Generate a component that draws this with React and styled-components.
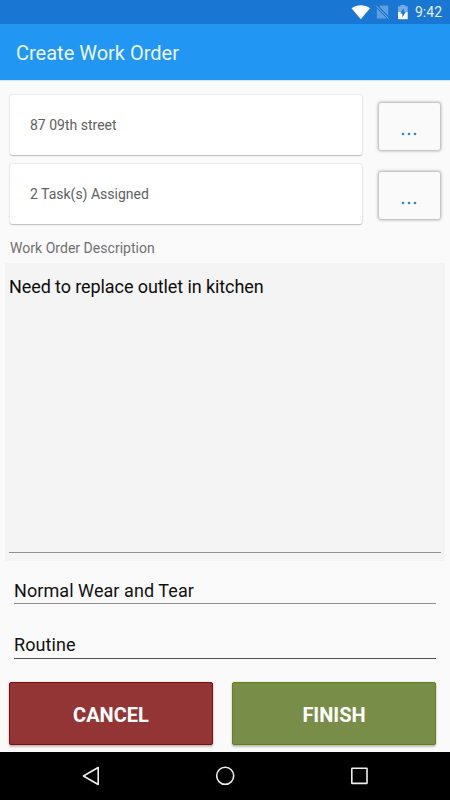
import React from "react";
import styled, { createGlobalStyle } from "styled-components";

const Global = createGlobalStyle`
  * { box-sizing: border-box; }
  body { margin: 0; background: #fafafa; }
  button { font-family: inherit; }
`;

const Screen = styled.div`
  width: 450px;
  height: 800px;
  display: flex;
  flex-direction: column;
  overflow: hidden;
  background: #fafafa;
  font-family: Roboto, sans-serif;
`;

const StatusBar = styled.div`
  height: 24px;
  flex: none;
  display: flex;
  justify-content: flex-end;
  background: #1976d2;
  padding-right: 8px;
`;

const StatusIcons = styled.svg`
  width: 60px;
  height: 24px;
`;

const Clock = styled.span`
  width: 32px;
  font-size: 14px;
  line-height: 25px;
  color: #e3effa;
  padding-left: 5px;
  white-space: nowrap;
`;

const AppBar = styled.header`
  height: 56px;
  flex: none;
  display: flex;
  align-items: center;
  padding: 2px 16px 0;
  background: #2196f3;
  box-shadow: 0 1px 0 #d3e5f2;
`;

const Title = styled.h1`
  margin: 0;
  font-size: 20px;
  line-height: 24px;
  font-weight: 400;
  color: #eef7fe;
`;

const Pickers = styled.div`
  display: grid;
  flex: none;
  padding: 15px 10px 0;
  row-gap: 9px;
`;

const PickerRow = styled.div`
  display: flex;
  justify-content: space-between;
  align-items: flex-start;
  height: 60px;
`;

const Card = styled.div`
  width: 352px;
  height: 60px;
  padding-left: 20px;
  border-radius: 2px;
  background: #fff;
  box-shadow: 0 0 2px rgba(0, 0, 0, 0.2), 0 1px 1px rgba(0, 0, 0, 0.2);
  font-size: 14px;
  line-height: 61px;
  color: #606060;
`;

const MoreButton = styled.button`
  width: 61px;
  height: 47px;
  margin: 8px 0 0;
  padding: 14px 2px 0 0;
  border: 0;
  border-radius: 2px;
  background: #fafafa;
  box-shadow: 0 0 3px 1px rgba(0, 0, 0, 0.32);
  display: flex;
  justify-content: center;
  align-items: center;
`;

const Dots = styled.svg`
  width: 18px;
  height: 4px;
`;

const FieldLabel = styled.label`
  flex: none;
  height: 31px;
  padding-left: 10px;
  font-size: 14px;
  line-height: 33px;
  letter-spacing: 0.03px;
  color: #707070;
  margin-top: 8px;
`;

const Description = styled.div`
  flex: none;
  height: 298px;
  margin: 0 5px;
  padding: 0 4px 8px;
  background: #f4f4f4;
`;

const DescriptionInput = styled.div`
  height: 290px;
  padding-top: 13px;
  border-bottom: 1px solid #909090;
  font-size: 18px;
  line-height: 22px;
  letter-spacing: -0.09px;
  color: #0d0d0d;
`;

const Selects = styled.div`
  flex: none;
  padding: 0 14px;
`;

const Select = styled.div`
  height: ${(p) => p.$height}px;
  display: flex;
  align-items: flex-end;
  padding-bottom: ${(p) => p.$gap}px;
  border-bottom: 1px solid ${(p) => p.$line};
  font-size: 18px;
  line-height: 22px;
  letter-spacing: 0.07px;
  color: #111;
`;

const Actions = styled.div`
  display: flex;
  gap: 19px;
  flex: none;
  height: 93px;
  padding: 23px 14px 0 9px;
`;

const Action = styled.button`
  width: 204px;
  height: 63px;
  padding: 2px 0 0;
  border: 1px solid ${(p) => p.$edge};
  border-radius: 2px;
  background: ${(p) => p.$fill};
  box-shadow: 0 2px 2px rgba(0, 0, 0, 0.22), 0 0 2px rgba(0, 0, 0, 0.15);
  font-size: 20px;
  font-weight: 700;
  color: #fff;
`;

const NavBar = styled.nav`
  height: 48px;
  flex: none;
  display: flex;
  justify-content: space-between;
  align-items: center;
  padding: 0 80px;
  background: #000;
`;

const NavIcon = styled.svg`
  width: 22px;
  height: 22px;
  fill: none;
  stroke: #eee;
  stroke-width: 1.6;
`;

const More = () => (
  <MoreButton aria-label="More">
    <Dots viewBox="0 0 18 4" fill="#2f86d0">
      <circle cx="3" cy="2" r="1.3" />
      <circle cx="9" cy="2" r="1.3" />
      <circle cx="15" cy="2" r="1.3" />
    </Dots>
  </MoreButton>
);

export default function App() {
  return (
    <Screen>
      <Global />
      <StatusBar>
        <StatusIcons viewBox="350 0 60 24">
          <path d="M351.5 8.2C356.5 4.2 365 4.2 370 8.2L360.8 19.2Z" fill="#fff" />
          <path d="M380.6 5.5H388.2V16L379 6.9ZM376.8 8.6L386.8 18.6H376.8Z" fill="#5e9fdf" />
          <path d="M376 5.6L388.6 18.5" stroke="#78afe4" strokeWidth="1" />
          <path d="M379 6.9L388.2 16.1" stroke="#1976d2" strokeWidth="1" />
          <path d="M398 6.3H400.5V5H405.2V6.3H407.7V12H398Z" fill="#75ade4" />
          <path d="M398 12H407.7V19.2H398Z" fill="#fff" />
          <path d="M403.8 8L400.2 13.4H402.4V17.4L405.9 11.8H403.8Z" fill="#1976d2" />
        </StatusIcons>
        <Clock>9:42</Clock>
      </StatusBar>
      <AppBar>
        <Title>Create Work Order</Title>
      </AppBar>
      <Pickers>
        <PickerRow>
          <Card>87 09th street</Card>
          <More />
        </PickerRow>
        <PickerRow>
          <Card>2 Task(s) Assigned</Card>
          <More />
        </PickerRow>
      </Pickers>
      <FieldLabel>Work Order Description</FieldLabel>
      <Description>
        <DescriptionInput>Need to replace outlet in kitchen</DescriptionInput>
      </Description>
      <Selects>
        <Select $height={43} $gap={1} $line="#8c8c8c">Normal Wear and Tear</Select>
        <Select $height={55} $gap={2} $line="#505050">Routine</Select>
      </Selects>
      <Actions>
        <Action $fill="#933534" $edge="#850b0b">CANCEL</Action>
        <Action $fill="#788e48" $edge="#668012">FINISH</Action>
      </Actions>
      <NavBar>
        <NavIcon viewBox="0 0 22 22">
          <path d="M18.2 2.5V19.5L3.4 11Z" strokeLinejoin="round" />
        </NavIcon>
        <NavIcon viewBox="0 0 22 22">
          <circle cx="11.2" cy="10.8" r="8.5" />
        </NavIcon>
        <NavIcon viewBox="0 0 22 22">
          <rect x="3.8" y="3.2" width="15.2" height="15.2" rx="0.5" />
        </NavIcon>
      </NavBar>
    </Screen>
  );
}
